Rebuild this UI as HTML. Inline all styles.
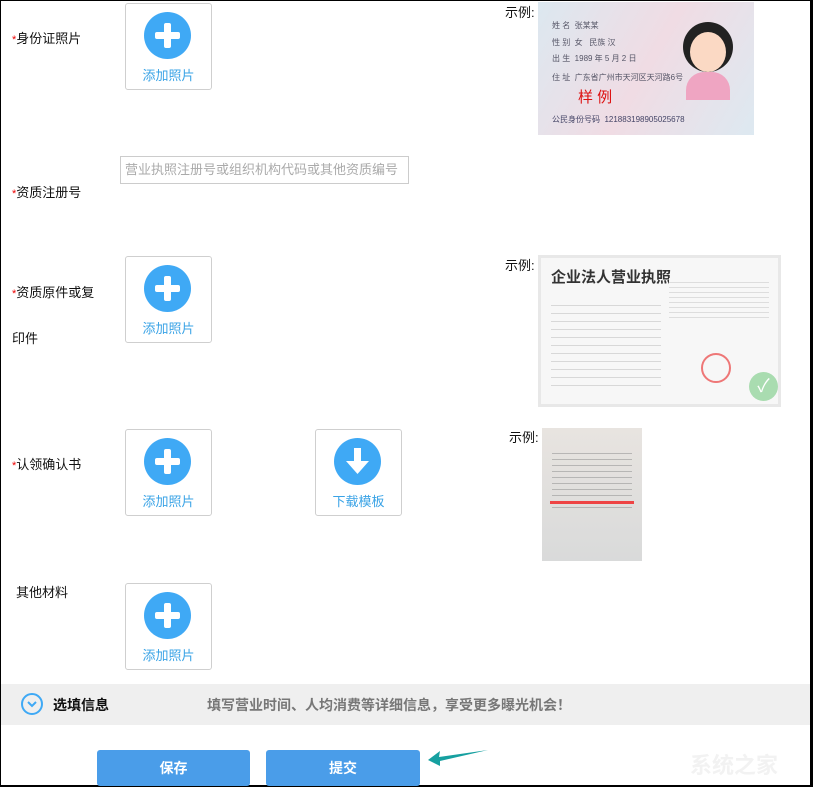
<!DOCTYPE html>
<html><head><meta charset="utf-8"><style>
*{margin:0;padding:0;box-sizing:border-box}
body{width:813px;height:787px;background:#fff;position:relative;overflow:hidden;font-family:"Liberation Sans","Noto Sans CJK SC",sans-serif;font-size:13px;color:#111}
.a{position:absolute;white-space:nowrap}
.lbl{font-size:13px;line-height:16px}
.st{color:#e00;font-size:11px}
.up{position:absolute;width:87px;height:87px;border:1px solid #cfcfcf;border-radius:3px;background:#fff}
.up .c{position:absolute;left:18px;top:8px;width:47px;height:47px;border-radius:50%;background:#3fa9f5}
.up .t{position:absolute;left:0;right:0;top:61px;text-align:center;color:#3aa3e6;font-size:13px}
.pl1{position:absolute;left:20px;top:11px;width:7px;height:25px;background:#fff;border-radius:2px}
.pl2{position:absolute;left:11px;top:20px;width:25px;height:7px;background:#fff;border-radius:2px}
.btn{position:absolute;top:750px;height:36px;background:#4a9de9;border-radius:3px;color:#fff;font-weight:bold;font-size:14px;text-align:center;line-height:36px}
</style></head><body>
<div class="a" style="left:0;top:0;width:813px;height:1px;background:#000"></div>
<div class="a" style="left:0;top:0;width:1px;height:787px;background:#000"></div>
<div class="a" style="left:810px;top:0;width:3px;height:787px;background:#000"></div>
<div class="a" style="left:0;top:785px;width:813px;height:2px;background:#000"></div>

<div class="a lbl" style="left:12px;top:31px"><span class="st">*</span>身份证照片</div>
<div class="a lbl" style="left:12px;top:185px"><span class="st">*</span>资质注册号</div>
<div class="a lbl" style="left:12px;top:285px"><span class="st">*</span>资质原件或复</div>
<div class="a lbl" style="left:12px;top:331px">印件</div>
<div class="a lbl" style="left:12px;top:457px"><span class="st">*</span>认领确认书</div>
<div class="a lbl" style="left:16px;top:585px">其他材料</div>

<div class="up" style="left:125px;top:3px"><div class="c"><div class="pl1"></div><div class="pl2"></div></div><div class="t">添加照片</div></div>
<div class="up" style="left:125px;top:256px"><div class="c"><div class="pl1"></div><div class="pl2"></div></div><div class="t">添加照片</div></div>
<div class="up" style="left:125px;top:429px"><div class="c"><div class="pl1"></div><div class="pl2"></div></div><div class="t">添加照片</div></div>
<div class="up" style="left:315px;top:429px"><div class="c"><svg width="47" height="47" viewBox="0 0 47 47"><rect x="20" y="10" width="7" height="16" fill="#fff"/><path d="M12 23 L35 23 L23.5 36 Z" fill="#fff"/></svg></div><div class="t">下载模板</div></div>
<div class="up" style="left:125px;top:583px"><div class="c"><div class="pl1"></div><div class="pl2"></div></div><div class="t">添加照片</div></div>

<div class="a" style="left:120px;top:156px;width:289px;height:28px;border:1px solid #ccc;color:#aaa;font-size:13px;line-height:26px;padding-left:4px;overflow:hidden">营业执照注册号或组织机构代码或其他资质编号</div>

<div class="a lbl" style="left:505px;top:5px">示例:</div>
<div class="a" style="left:538px;top:2px;width:216px;height:133px;background:linear-gradient(120deg,#dce8f0,#f0dce4 50%,#dde9f1);font-size:8px;color:#334">
<div class="a" style="left:14px;top:18px;color:#556">姓 名 &nbsp;张某某</div>
<div class="a" style="left:14px;top:35px;color:#556">性 别 &nbsp;女 &nbsp; 民族 汉</div>
<div class="a" style="left:14px;top:51px;color:#556">出 生 &nbsp;1989 年 5 月 2 日</div>
<div class="a" style="left:14px;top:70px;color:#556">住 址 &nbsp;广东省广州市天河区天河路6号</div>
<div class="a" style="left:40px;top:84px;color:#d11;font-size:15px">样 例</div>
<div class="a" style="left:14px;top:112px;color:#446">公民身份号码 &nbsp;121883198905025678</div>
<div class="a" style="left:145px;top:20px;width:50px;height:50px;border-radius:50%;background:#222"></div>
<div class="a" style="left:152px;top:30px;width:36px;height:40px;border-radius:50%;background:#fbd9c4"></div>
<div class="a" style="left:148px;top:70px;width:44px;height:28px;border-radius:18px 18px 0 0;background:#efa5c2"></div>
</div>

<div class="a lbl" style="left:505px;top:258px">示例:</div>
<div class="a" style="left:538px;top:255px;width:243px;height:152px;background:#e8e8e8;padding:3px">
<div style="width:100%;height:100%;background:#f7f7f7;position:relative">
<div class="a" style="left:10px;top:8px;font-size:15px;font-weight:bold;color:#333">企业法人营业执照</div>
<div class="a" style="left:10px;top:40px;width:110px;height:90px;background:repeating-linear-gradient(#f7f7f7 0 7px,#d8d8d8 7px 8px)"></div>
<div class="a" style="left:128px;top:20px;width:100px;height:40px;background:repeating-linear-gradient(#f7f7f7 0 4px,#ddd 4px 5px)"></div>
<div class="a" style="left:160px;top:95px;width:30px;height:30px;border-radius:50%;border:2px solid #e77"></div>
<div class="a" style="left:208px;top:114px;width:29px;height:29px;border-radius:50%;background:#a9dcb0;color:#fff;font-size:18px;text-align:center;line-height:29px">✓</div>
</div></div>

<div class="a lbl" style="left:509px;top:430px">示例:</div>
<div class="a" style="left:542px;top:428px;width:100px;height:133px;background:linear-gradient(#e8e4e0,#d9dada)">
<div class="a" style="left:10px;top:20px;width:80px;height:60px;background:repeating-linear-gradient(transparent 0 5px,#999 5px 6px);opacity:.6"></div>
<div class="a" style="left:8px;top:73px;width:84px;height:3px;background:#e44"></div>
</div>

<div class="a" style="left:1px;top:684px;width:809px;height:41px;background:#efefef"></div>
<div class="a" style="left:21px;top:693px;width:22px;height:22px;border:2px solid #3fa9f5;border-radius:50%"><svg width="18" height="18" viewBox="0 0 18 18" style="position:absolute;left:0;top:0"><path d="M5 7 L9 11 L13 7" stroke="#3fa9f5" stroke-width="2" fill="none"/></svg></div>
<div class="a" style="left:53px;top:695px;font-size:14px;font-weight:bold;color:#111">选填信息</div>
<div class="a" style="left:207px;top:695px;font-size:14px;font-weight:bold;color:#777">填写营业时间、人均消费等详细信息，享受更多曝光机会！</div>

<div class="btn" style="left:97px;width:153px">保存</div>
<div class="btn" style="left:266px;width:154px">提交</div>
<svg class="a" style="left:426px;top:748px" width="64" height="20" viewBox="0 0 64 20"><path d="M2 12 L14 3 L13 9 L62 2 L14 13 L14 18 Z" fill="#16a0a0"/></svg>
<div class="a" style="left:690px;top:748px;color:#f2f2f2;font-size:22px;font-weight:bold">系统之家</div>
</body></html>
